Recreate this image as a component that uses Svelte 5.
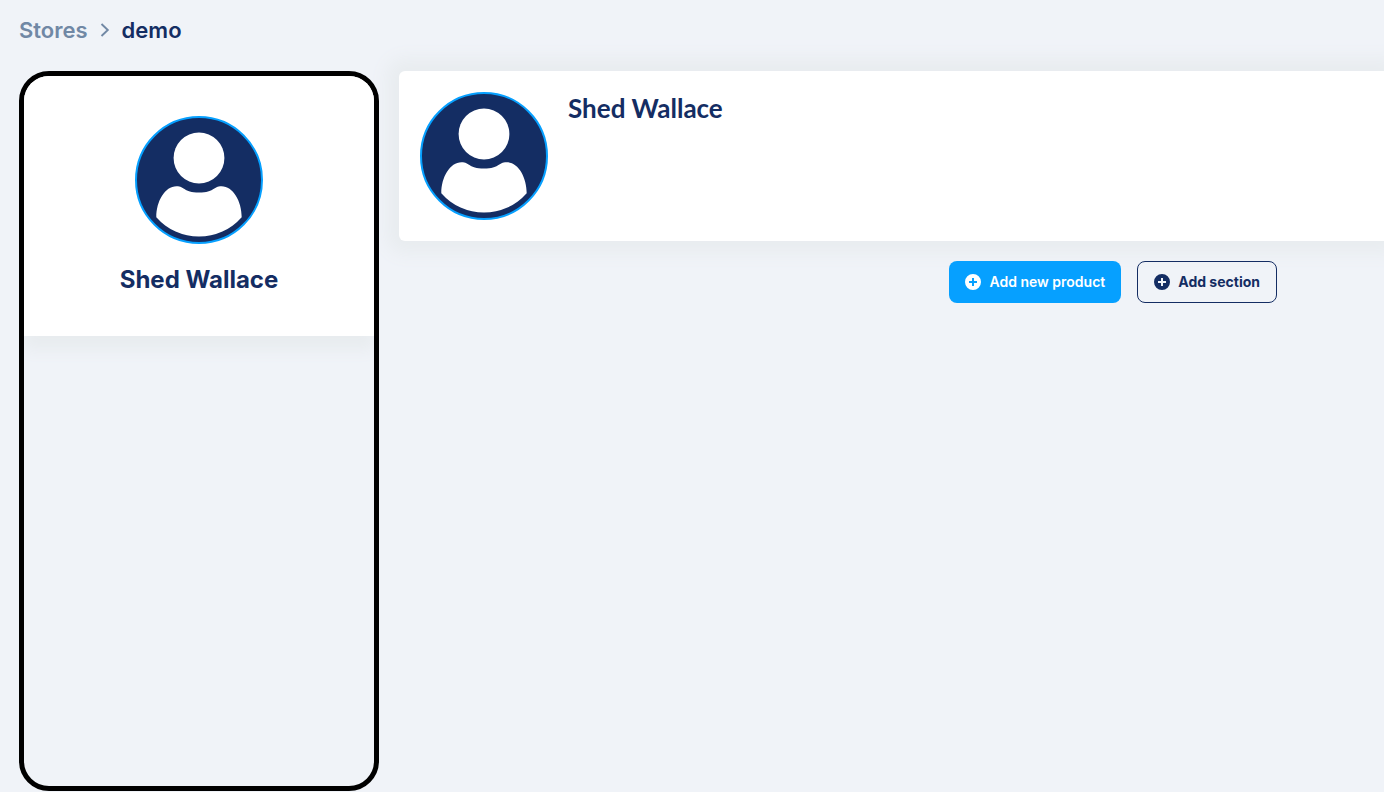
<script lang="ts">
  // Store page: breadcrumb, store sidebar, profile banner and the
  // actions for adding products and sections.
  interface Store {
    slug: string;
    owner: string;
  }

  let { store = { slug: "demo", owner: "Shed Wallace" } }: { store?: Store } = $props();
</script>

{#snippet avatar()}
  <svg class="avatar" viewBox="0 0 128 128" role="img" aria-label={store.owner}>
    <circle cx="64" cy="64" r="63" fill="#142d63" stroke="#06a0ff" stroke-width="2" />
    <circle cx="64" cy="42" r="25.4" fill="#fff" />
    <path
      d="M21.3 101.3C21.3 85 30 70.2 41.5 70.2C50 70.2 48 76.4 64 76.4C80 76.4 78 70.2 86.5 70.2C98 70.2 106.7 85 106.7 101.3A57 57 0 0 1 21.3 101.3Z"
      fill="#fff"
    />
  </svg>
{/snippet}

{#snippet plus()}
  <svg class="plus" viewBox="0 0 16 16" aria-hidden="true">
    <path
      fill="currentColor"
      fill-rule="evenodd"
      d="M8 0a8 8 0 1 0 0 16A8 8 0 0 0 8 0ZM7 4h2V7h3v2H9v3H7V9H4V7h3Z"
    />
  </svg>
{/snippet}

<div class="page">
  <nav class="breadcrumb" aria-label="Breadcrumb">
    <a href="#stores">Stores</a>
    <svg class="chevron" viewBox="0 0 10 16" aria-hidden="true">
      <path d="M1.5 2L7.8 8L1.5 14" fill="none" stroke="currentColor" stroke-width="1.9" />
    </svg>
    <span aria-current="page">{store.slug}</span>
  </nav>

  <div class="columns">
    <aside class="sidebar">
      <div class="owner">
        {@render avatar()}
        <h2>{store.owner}</h2>
      </div>
    </aside>

    <main>
      <section class="banner">
        {@render avatar()}
        <h1>{store.owner}</h1>
      </section>

      <div class="actions">
        <button type="button" class="primary">{@render plus()}Add new product</button>
        <button type="button">{@render plus()}Add section</button>
      </div>
    </main>
  </div>
</div>

<style>
  :global(body) {
    margin: 0;
    background: #f0f3f8;
  }
  .page {
    box-sizing: border-box;
    display: flex;
    flex-direction: column;
    min-height: 100vh;
    padding: 16px 0 1px 19px;
    overflow: hidden;
    color: #142d63;
    font-family: Inter, "Liberation Sans", sans-serif;
  }
  .breadcrumb {
    display: flex;
    align-items: center;
    gap: 12px;
    height: 28px;
    margin-bottom: 27px;
    font-size: 22px;
    font-weight: 600;
    line-height: 28px;
  }
  .breadcrumb a {
    color: #7188a5;
    text-decoration: none;
  }
  .chevron {
    width: 10px;
    height: 16px;
    color: #7188a5;
  }
  .columns {
    display: flex;
    flex: 1;
    gap: 20px;
  }
  /* stays above the banner's shadow */
  .sidebar {
    position: relative;
    z-index: 1;
    box-sizing: border-box;
    flex: 0 0 360px;
    overflow: hidden;
    border: 5px solid #000;
    border-radius: 30px;
  }
  .owner {
    display: flex;
    flex-direction: column;
    align-items: center;
    gap: 20px;
    padding: 40px 20px;
    background: #fff;
    box-shadow: 0 14px 14px 0 #e8ecef;
  }
  .avatar {
    flex: none;
    width: 128px;
    height: 128px;
  }
  h1,
  h2 {
    margin: 0;
    font-size: 24px;
    font-weight: 700;
    line-height: 32px;
  }
  h1 {
    font-family: Lato, "Liberation Sans", sans-serif;
    font-size: 26px;
  }
  main {
    flex: 1;
    min-width: 0;
  }
  .banner {
    display: flex;
    gap: 20px;
    padding: 21px;
    border-radius: 6px 0 0 6px;
    background: #fff;
    box-shadow: 0 0 18px 12px #e8ecef;
  }
  .actions {
    position: relative;
    display: flex;
    justify-content: flex-end;
    gap: 16px;
    padding: 20px 107px 0 0;
  }
  button {
    display: flex;
    align-items: center;
    gap: 8px;
    height: 42px;
    padding: 0 16px;
    border: 1px solid #142d63;
    border-radius: 8px;
    background: transparent;
    color: #142d63;
    font: 700 14px/20px Inter, "Liberation Sans", sans-serif;
    cursor: pointer;
  }
  button.primary {
    border: 0;
    background: #06a0ff;
    color: #fff;
    font-weight: 600;
  }
  .plus {
    width: 16px;
    height: 16px;
  }
</style>
